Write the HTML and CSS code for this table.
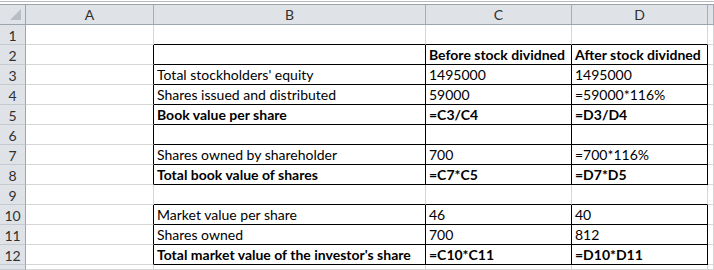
FILE: index.html
```html
<!DOCTYPE html>
<html>
<head>
<meta charset="utf-8">
<link rel="stylesheet" href="styles.css">
</head>
<body>
<div class="sheet">
  <div class="strip"></div>
  <div class="row head">
    <div class="corner"><span class="tri"></span></div>
    <div>A</div><div>B</div><div>C</div><div>D</div><div></div>
  </div>
  <div class="row edge"><div class="rh">1</div><div></div><div></div><div></div><div></div><div></div></div>
  <div class="row t"><div class="rh">2</div><div></div><div></div><div class="b">Before stock dividned</div><div class="b">After stock dividned</div><div></div></div>
  <div class="row t"><div class="rh">3</div><div></div><div>Total stockholders' equity</div><div>1495000</div><div>1495000</div><div></div></div>
  <div class="row t"><div class="rh">4</div><div></div><div>Shares issued and distributed</div><div>59000</div><div>=59000*116%</div><div></div></div>
  <div class="row t"><div class="rh">5</div><div></div><div class="b">Book value per share</div><div class="b">=C3/C4</div><div class="b">=D3/D4</div><div></div></div>
  <div class="row t"><div class="rh">6</div><div></div><div></div><div></div><div></div><div></div></div>
  <div class="row t"><div class="rh">7</div><div></div><div>Shares owned by shareholder</div><div>700</div><div>=700*116%</div><div></div></div>
  <div class="row t"><div class="rh">8</div><div></div><div class="b">Total book value of shares</div><div class="b">=C7*C5</div><div class="b">=D7*D5</div><div></div></div>
  <div class="row edge"><div class="rh">9</div><div></div><div></div><div></div><div></div><div></div></div>
  <div class="row t"><div class="rh">10</div><div></div><div>Market value per share</div><div>46</div><div>40</div><div></div></div>
  <div class="row t"><div class="rh">11</div><div></div><div>Shares owned</div><div>700</div><div>812</div><div></div></div>
  <div class="row t"><div class="rh">12</div><div></div><div class="b">Total market value of the investor's share</div><div class="b">=C10*C11</div><div class="b">=D10*D11</div><div></div></div>
  <div class="row short"><div class="rh"></div><div></div><div></div><div></div><div></div><div></div></div>
</div>
</body>
</html>
```
FILE: styles.css
```css
* { box-sizing: border-box; }
html, body { margin: 0; padding: 0; background: #fff; }
body { width: 714px; height: 270px; overflow: hidden; font-family: Lato, "Liberation Sans", sans-serif; font-size: 14px; color: #000; }
.sheet { width: 714px; height: 270px; overflow: hidden; }
.strip { height: 4px; margin-top: 1px; border-top: 1px solid #b7b9bc; border-bottom: 1px solid #9da3aa; }
.row { display: grid; grid-template-columns: 26px 128px 272px 146px 136px 1fr; height: 20px; }
.row.short { height: 5px; }
.row > div { border-right: 1px solid #d6d6d6; border-bottom: 1px solid #d6d6d6; display: flex; align-items: flex-end; padding: 0 2px 2px 3px; line-height: 15px; white-space: nowrap; overflow: hidden; }
.row > .rh { background: #dfe3e8; border-right-color: #9ea5ad; border-bottom-color: #c5cad0; justify-content: center; padding: 0 0 1px 0; color: #303030; }
.head > div { background: #dfe3e8; border-right-color: #a7adb4; border-bottom-color: #9ea5ad; justify-content: center; padding: 0 0 2px 0; color: #303030; }
.head > .corner { position: relative; border-right-color: #9ea5ad; }
.tri { position: absolute; right: 4px; bottom: 4px; width: 0; height: 0; border-left: 11px solid transparent; border-bottom: 11px solid #b9bec4; }
.b { font-weight: bold; }
.edge > div:nth-child(3), .edge > div:nth-child(4), .edge > div:nth-child(5) { border-bottom-color: #000; }
.t > div:nth-child(2), .t > div:nth-child(3), .t > div:nth-child(4), .t > div:nth-child(5) { border-right-color: #000; }
.t > div:nth-child(3), .t > div:nth-child(4), .t > div:nth-child(5) { border-bottom-color: #000; }
```
